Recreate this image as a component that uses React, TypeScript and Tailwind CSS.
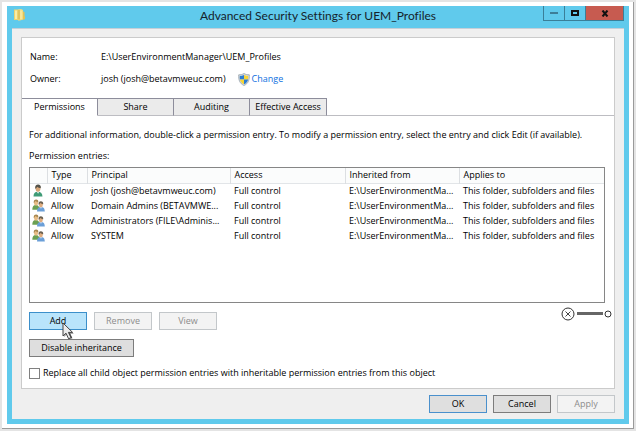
import { ReactNode, useState } from 'react';

interface Entry {
  group: boolean;
  principal: string;
}

const TABS = [
  { label: 'Permissions', width: 'w-[76px]' },
  { label: 'Share', width: 'w-[76px]' },
  { label: 'Auditing', width: 'w-[76px]' },
  { label: 'Effective Access', width: 'w-[77px]' },
];

const ENTRIES: Entry[] = [
  { group: false, principal: 'josh (josh@betavmweuc.com)' },
  { group: true, principal: 'Domain Admins (BETAVMWE...' },
  { group: true, principal: 'Administrators (FILE\\Adminis...' },
  { group: true, principal: 'SYSTEM' },
];

function FolderIcon() {
  return (
    <svg width="12" height="14" viewBox="0 0 12 14" aria-hidden="true">
      <path d="M0 1.500h4l1 1V12H0z" fill="#ecd36f" />
      <path d="M1 2.500h2V11H1z" fill="#f9eca6" />
      <path d="M4 1.500l3-.5 2 1v9.500L6 12.500H4z" fill="#f1dc80" />
      <path d="M9 3.500l1.500.5v4l.5.500V11l-2 1z" fill="#e3c257" />
      <path d="M5 2v9.500" stroke="#cfab45" strokeWidth="1" />
      <path d="M7 2.500v8.500" stroke="#fbf1b8" strokeWidth="1" />
    </svg>
  );
}

function ShieldIcon() {
  return (
    <svg width="12" height="13" viewBox="0 0 12 13" aria-hidden="true">
      <path
        d="M6 .5c1.700 1 3.400 1.300 5.300 1.300.3 4.800-.8 8.700-5.300 10.700C1.500 10.500.4 6.600.7 1.800 2.600 1.800 4.300 1.500 6 .5z"
        fill="#d5dbe0"
        stroke="#98a3ab"
        strokeWidth=".8"
      />
      <path d="M6 2v4.500H1.900C1.700 5.300 1.700 4.200 1.800 3 3.300 2.900 4.700 2.700 6 2z" fill="#2b7cd3" />
      <path d="M6 2v4.500h4.100c.2-1.200.2-2.300.1-3.500C8.700 2.900 7.300 2.700 6 2z" fill="#f8d535" />
      <path d="M6 6.500v4.800C3.700 10.200 2.400 8.600 1.900 6.500z" fill="#f8d535" />
      <path d="M6 6.500v4.800c2.300-1.100 3.600-2.700 4.100-4.800z" fill="#2b7cd3" />
    </svg>
  );
}

function UserIcon() {
  return (
    <svg width="12" height="13" viewBox="0 0 12 13" aria-hidden="true">
      <path d="M1.500 12.500c0-3 1.200-4.800 4.300-4.800s4.500 1.800 4.700 4.800z" fill="#3f9b76" />
      <path d="M4.800 7.800l1.300 2 1-2z" fill="#eef5ef" />
      <ellipse cx="6" cy="4.500" rx="2.400" ry="3.300" fill="#d6a577" />
      <path d="M3.200 4.800C2.800 1.800 4.200.5 6.100.5s3.100 1.200 2.700 3.700C7.500 4.200 6 3.500 5 2.800c-.2 1-.8 1.700-1.800 2z" fill="#54534a" />
    </svg>
  );
}

function GroupIcon() {
  return (
    <svg width="13" height="13" viewBox="0 0 13 13" aria-hidden="true">
      <path d="M.3 10.800c0-3 1-4.800 3.500-4.800s3.700 1.800 3.800 4.800z" fill="#6ba052" />
      <ellipse cx="4" cy="3.800" rx="2" ry="2.800" fill="#e8bd85" />
      <path d="M1.700 4C1.500 1.500 2.500.5 4.100.5s2.600 1 2.200 3C5 3.200 4 2.600 3.400 2 3 3 2.500 3.600 1.700 4z" fill="#a98850" />
      <path d="M5 12.500c.1-2.900 1.200-4.400 3.900-4.400s3.800 1.500 3.900 4.400z" fill="#6b9fd8" />
      <path d="M8 8.200l1 1.500.9-1.500z" fill="#f2f7fc" />
      <ellipse cx="8.900" cy="5.600" rx="2" ry="2.700" fill="#e0ad80" />
      <path d="M6.600 5.500c-.3-2.200.8-3.300 2.300-3.300s2.600 1 2.300 3C10 5 9 4.500 8.300 3.900 8 4.700 7.500 5.300 6.600 5.500z" fill="#6b6050" />
    </svg>
  );
}

function PointerIcon() {
  return (
    <svg width="14" height="20" viewBox="0 0 14 20" aria-hidden="true">
      <path d="M2 3v12l3-2.500 2.500 5.500 3-1.500L8 12h4z" fill="#777" opacity=".6" />
      <path
        d="M1 1v13l3-2.800 2.600 5.600 2.400-1.200-2.600-5.200h4.200z"
        fill="#ececec"
        stroke="#444"
        strokeWidth="1"
      />
      <path d="M7.500 11l2.300 5" stroke="#444" strokeWidth="1" />
    </svg>
  );
}

function ZoomHandle() {
  return (
    <svg width="52" height="14" viewBox="0 0 52 14" fill="none" aria-hidden="true">
      <circle cx="7" cy="7" r="6" stroke="#333" />
      <path d="M4.500 4.500l5 5M9.500 4.500l-5 5" stroke="#444" />
      <path d="M16 6.500h26" stroke="#666" strokeWidth="3" />
      <circle cx="47" cy="7" r="3" stroke="#333" />
    </svg>
  );
}

interface DialogButtonProps {
  children: ReactNode;
  disabled?: boolean;
  primary?: boolean;
  wide?: boolean;
}

function DialogButton({ children, disabled, primary, wide }: DialogButtonProps) {
  const tone = disabled
    ? 'border-[#c3c7ca] bg-[#f3f3f3] text-[#8c8c8c]'
    : primary
      ? 'border-[#4a90cc] bg-[#dfdfdf]'
      : 'border-[#7c7c7c] bg-[#dedede]';
  return (
    <button
      disabled={disabled}
      className={`flex h-[18px] items-center justify-center border ${tone} ${wide ? 'w-[105px]' : 'w-[58px]'}`}
    >
      {children}
    </button>
  );
}

export default function App() {
  const [tab, setTab] = useState('Permissions');
  const [replace, setReplace] = useState(false);

  return (
    <div className="bg-[#e4e4e4] pt-0.5 pr-0.5 pb-0.5 pl-0.5 font-['Open_Sans','Noto_Sans',sans-serif] text-[9px] leading-[14px] text-black">
      <div className="border-r border-b border-[#9a9a9a] bg-white pt-1 pr-1 pb-1 pl-[5px]">
        <div className="bg-[#60caec] px-[5px] pb-[5px]">
          <header className="grid h-[22px] grid-cols-[81px_1fr_81px] items-start">
            <span className="pt-0.5 pl-0.5">
              <FolderIcon />
            </span>
            <h1 className="pt-0.5 text-center font-['Lato','Open_Sans',sans-serif] text-[12px] leading-4 text-[#16232b] [font-variant-ligatures:none]">
              Advanced Security Settings for UEM_Profiles
            </h1>
            <div className="flex h-[15px] border-x border-b border-[#3a7f98]">
              <button aria-label="Minimize" className="flex flex-1 items-center justify-center border-r border-[#3a7f98]">
                <span className="h-0.5 w-2 bg-[#3d7e98]" />
              </button>
              <button aria-label="Maximize" className="flex flex-1 items-center justify-center border-r border-[#3a7f98]">
                <span className="h-[6px] w-2 border-2 border-[#101010]" />
              </button>
              <button aria-label="Close" className="flex w-[37px] items-center justify-center bg-[#c75b50]">
                <svg width="8" height="7" viewBox="0 0 8 7" aria-hidden="true">
                  <path d="M1.500 .5l5 6M6.500 .5l-5 6" stroke="#111" strokeWidth="2" />
                </svg>
              </button>
            </div>
          </header>

          <main className="border-t border-[#c5cfd8] bg-[#efefef] px-[9px] pt-2 pb-[6px]">
            <div className="border border-[#cbcbcb] bg-white">
              <dl className="grid grid-cols-[71px_1fr] gap-y-2 pt-3 pb-3 pl-2">
                <dt>Name:</dt>
                <dd>E:\UserEnvironmentManager\UEM_Profiles</dd>
                <dt>Owner:</dt>
                <dd className="flex gap-3">
                  josh (josh@betavmweuc.com)
                  <a href="#change" className="flex items-center gap-0.5 text-[#0d6fe0]">
                    <ShieldIcon />
                    Change
                  </a>
                </dd>
              </dl>

              <div role="tablist" className="flex h-[18px] border-b border-[#bdbdc2]">
                {TABS.map(({ label, width }) => (
                  <button
                    key={label}
                    role="tab"
                    aria-selected={tab === label}
                    onClick={() => setTab(label)}
                    className={`${width} h-[18px] border-t border-r border-b border-[#8d8d9b] ${
                      tab === label ? 'border-b-white bg-white' : 'border-b-[#bdbdc2] bg-[#ebebeb]'
                    }`}
                  >
                    {label}
                  </button>
                ))}
              </div>

              <section className="pt-3 pr-[9px] pb-2 pl-[7px]">
                <p>
                  For additional information, double-click a permission entry. To modify a permission
                  entry, select the entry and click Edit (if available).
                </p>
                <p className="mt-[7px] mb-1">Permission entries:</p>

                <div className="min-h-[136px] border border-[#868686]">
                  <table className="w-full table-fixed border-collapse whitespace-nowrap">
                    <colgroup>
                      <col className="w-[17px]" />
                      <col className="w-[40px]" />
                      <col className="w-[143px]" />
                      <col className="w-[115px]" />
                      <col className="w-[114px]" />
                      <col />
                    </colgroup>
                    <thead>
                      <tr className="h-[15px] border-b border-[#e2e5e8] bg-[#fbfcfc] text-left *:border-r *:border-[#dcdfe2] *:p-0 *:pl-1 *:font-normal *:last:border-r-0">
                        <th aria-label="Kind" />
                        <th>Type</th>
                        <th>Principal</th>
                        <th>Access</th>
                        <th>Inherited from</th>
                        <th>Applies to</th>
                      </tr>
                    </thead>
                    <tbody>
                      {ENTRIES.map(({ group, principal }) => (
                        <tr key={principal} className="h-[15px] *:p-0 *:pl-1">
                          <td>
                            <span className="-ml-0.5 flex">{group ? <GroupIcon /> : <UserIcon />}</span>
                          </td>
                          <td>Allow</td>
                          <td>{principal}</td>
                          <td>Full control</td>
                          <td>E:\UserEnvironmentMa...</td>
                          <td>This folder, subfolders and files</td>
                        </tr>
                      ))}
                    </tbody>
                  </table>
                </div>

                <div className="mt-[9px] flex items-start justify-between">
                  <div className="flex gap-[7px]">
                    <div className="relative">
                      <button className="flex h-[18px] w-[58px] items-center justify-center border border-[#3c8fca] bg-[#b9e4fb]">
                        Add
                      </button>
                      <span className="pointer-events-none absolute top-[10px] left-[33px]">
                        <PointerIcon />
                      </span>
                    </div>
                    <DialogButton disabled>Remove</DialogButton>
                    <DialogButton disabled>View</DialogButton>
                  </div>
                  <span className="-mt-[5px] -mr-2">
                    <ZoomHandle />
                  </span>
                </div>

                <div className="mt-[9px]">
                  <DialogButton wide>Disable inheritance</DialogButton>
                </div>

                <label className="mt-[9px] flex items-center gap-[3px]">
                  <input
                    type="checkbox"
                    checked={replace}
                    onChange={(e) => setReplace(e.target.checked)}
                    className="h-[11px] w-[11px] appearance-none border border-[#808080] bg-white checked:bg-[#3c8fca]"
                  />
                  Replace all child object permission entries with inheritable permission entries from
                  this object
                </label>
              </section>
            </div>

            <footer className="mt-[6px] flex justify-end gap-[6px]">
              <DialogButton primary>OK</DialogButton>
              <DialogButton>Cancel</DialogButton>
              <DialogButton disabled>Apply</DialogButton>
            </footer>
          </main>
        </div>
      </div>
    </div>
  );
}
